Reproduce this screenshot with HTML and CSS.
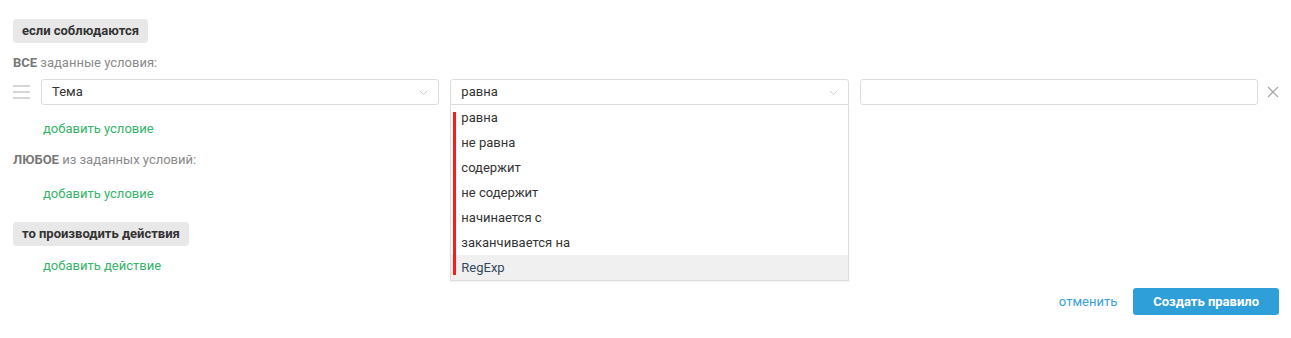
FILE: index.html
```html
<!DOCTYPE html>
<html lang="ru">
<head>
  <meta charset="UTF-8">
  <title>Новое правило</title>
  <link rel="stylesheet" href="styles.css">
</head>
<body>

  <div class="rule">

    <div class="badge">если соблюдаются</div>

    <div class="group-title"><b>ВСЕ</b> заданные условия:</div>

    <div class="cond-row">
      <div class="drag">
        <span></span><span></span><span></span>
      </div>

      <div class="field select">
        <span>Тема</span>
        <svg class="chevron" width="9" height="6" viewBox="0 0 9 6"><path d="M1 1l3.5 3.5L8 1" fill="none" stroke="#ccc" stroke-width="1"/></svg>
      </div>

      <div class="field select open">
        <span>равна</span>
        <svg class="chevron" width="9" height="6" viewBox="0 0 9 6"><path d="M1 1l3.5 3.5L8 1" fill="none" stroke="#ccc" stroke-width="1"/></svg>

        <ul class="dropdown">
          <li>равна</li>
          <li>не равна</li>
          <li>содержит</li>
          <li>не содержит</li>
          <li>начинается с</li>
          <li>заканчивается на</li>
          <li class="hover">RegExp</li>
          <div class="marker"></div>
        </ul>
      </div>

      <div class="field"></div>

      <div class="remove">
        <svg width="12" height="12" viewBox="0 0 12 12"><path d="M1 1l10 10M11 1L1 11" stroke="#aaa" stroke-width="1.3"/></svg>
      </div>
    </div>

    <div class="add-link first">добавить условие</div>

    <div class="group-title any"><b>ЛЮБОЕ</b> из заданных условий:</div>

    <div class="add-link second">добавить условие</div>

    <div class="badge actions">то производить действия</div>

    <div class="add-link third">добавить действие</div>

    <div class="footer">
      <span class="cancel">отменить</span>
      <button class="create-btn">Создать правило</button>
    </div>

  </div>

</body>
</html>
```

FILE: styles.css
```css
body {
  margin: 0;
  font-family: Roboto, "Liberation Sans", sans-serif;
  font-size: 13px;
  color: #333;
  background: #fff;
}

.rule {
  padding: 19px 12px 0 13px;
}

.badge {
  display: inline-block;
  height: 24px;
  line-height: 24px;
  padding: 0 9px;
  background-color: #e8e8e8;
  border-radius: 4px;
  font-weight: bold;
  color: #333;
}

.badge.actions {
  margin-top: 20px;
}

.group-title {
  margin-top: 12px;
  line-height: 16px;
  color: #8a8a8a;
}

.group-title b {
  color: #777;
}

.group-title.any {
  margin-top: 15px;
}

.cond-row {
  display: flex;
  align-items: center;
  gap: 11px;
  margin-top: 8px;
  height: 26px;
}

.drag {
  width: 17px;
  display: flex;
  flex-direction: column;
  gap: 4px;
}

.drag span {
  display: block;
  height: 2px;
  background-color: #d6d6d6;
}

.field {
  flex: 1;
  position: relative;
  height: 26px;
  box-sizing: border-box;
  border: 1px solid #ddd;
  border-radius: 3px;
  padding: 0 10px;
  line-height: 24px;
  color: #333;
}

.select .chevron {
  position: absolute;
  right: 10px;
  top: 10px;
}

.open {
  border-radius: 3px 3px 0 0;
}

.dropdown {
  position: absolute;
  left: -1px;
  right: -1px;
  top: 25px;
  margin: 0;
  padding: 0;
  list-style: none;
  background: #fff;
  border: 1px solid #ddd;
  border-top: none;
  box-shadow: 0 1px 2px rgba(0, 0, 0, 0.06);
  z-index: 5;
}

.dropdown li {
  height: 25px;
  line-height: 25px;
  padding-left: 10px;
  color: #333;
}

.dropdown li.hover {
  background-color: #f0f0f0;
  color: #34495e;
}

.marker {
  position: absolute;
  left: 2px;
  top: 7px;
  width: 3px;
  height: 163px;
  background-color: #ff1a1a;
}

.remove {
  width: 12px;
  margin-left: -2px;
}

.remove svg {
  display: block;
}

.add-link {
  padding-left: 30px;
  line-height: 16px;
  color: #35b36a;
}

.add-link.first {
  margin-top: 16px;
}

.add-link.second {
  margin-top: 18px;
}

.add-link.third {
  margin-top: 12px;
}

.footer {
  display: flex;
  justify-content: flex-end;
  align-items: center;
  gap: 16px;
  margin-top: 14px;
}

.cancel {
  color: #3a9fd6;
}

.create-btn {
  height: 27px;
  padding: 0 20px;
  border: none;
  border-radius: 3px;
  background-color: #2f9fd9;
  color: #fff;
  font-family: inherit;
  font-size: 13px;
  font-weight: bold;
}
```
